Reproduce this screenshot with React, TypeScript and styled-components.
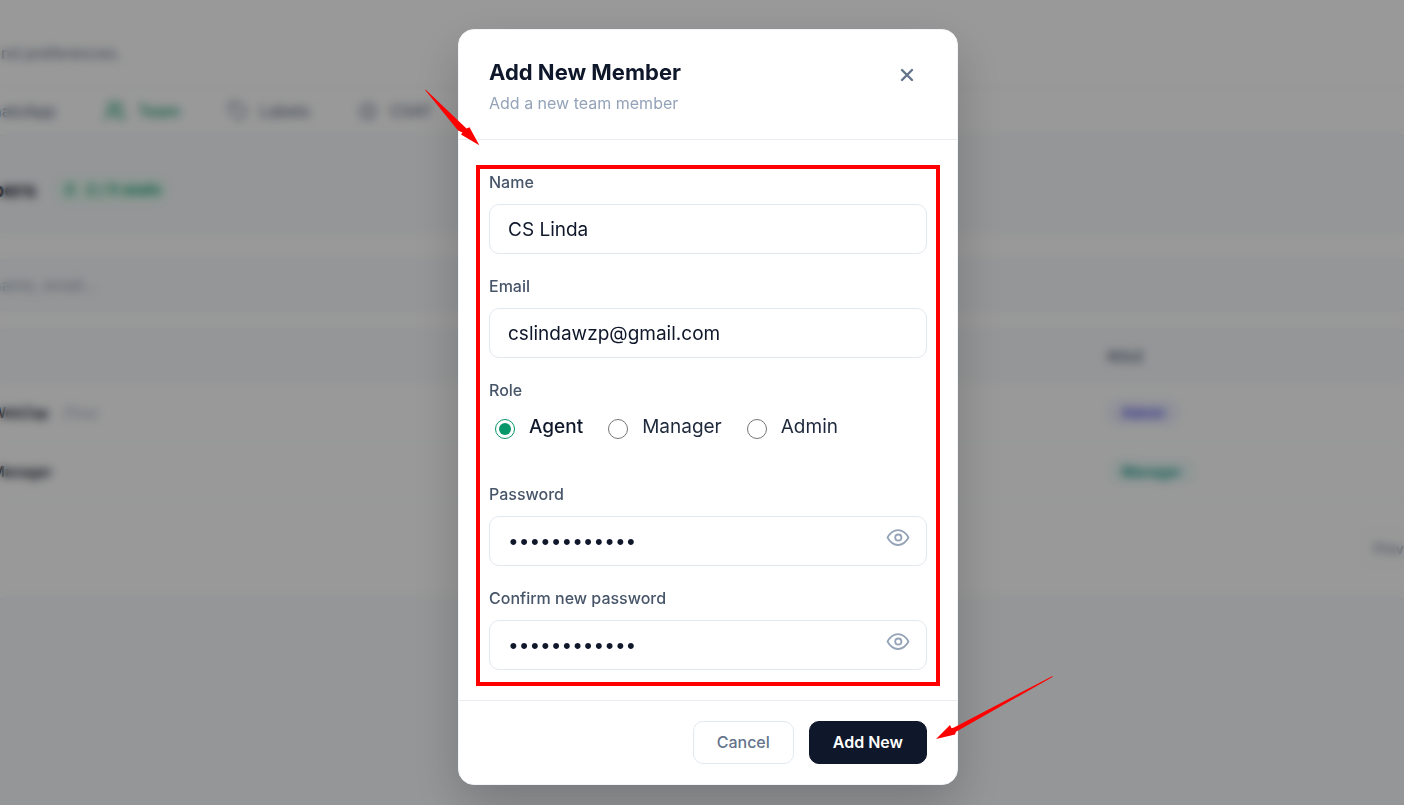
import React, { useState } from "react";
import styled, { createGlobalStyle } from "styled-components";
import { Tag, Star, Users, User } from "lucide-react";

const GlobalStyle = createGlobalStyle`
  *, *::before, *::after { box-sizing: border-box; }
  body {
    margin: 0;
    min-height: 100vh;
    background: #f8fafc;
    font-family: Inter, "Liberation Sans", sans-serif;
    color: #0f172a;
    overflow: hidden;
  }
  button, input { font: inherit; }
`;

const Backdrop = styled.div`
  height: 100vh;
  margin-left: -8px;
  overflow: hidden;
`;

const PageHeader = styled.header`
  background: #ffffff;
`;

const PageIntro = styled.p`
  margin: 0;
  padding: 41px 0 21px;
  font-size: 16px;
  line-height: 24px;
  color: #64748b;
  border-bottom: 1px solid #f1f5f9;
`;

const Tabs = styled.nav`
  display: flex;
  align-items: center;
  gap: 48px;
  height: 49px;
  border-bottom: 1px solid #e2e8f0;
`;

const Tab = styled.a<{ $active?: boolean }>`
  display: flex;
  align-items: center;
  gap: 12px;
  font-size: 16px;
  font-weight: 500;
  text-decoration: none;
  color: ${(p) => (p.$active ? "#059669" : "#64748b")};
`;

const SectionHead = styled.div`
  display: flex;
  align-items: center;
  gap: 18px;
  padding: 40px 0 28px;
`;

const SectionTitle = styled.h2`
  margin: 0;
  font-size: 20px;
  line-height: 28px;
  font-weight: 700;
`;

const Seats = styled.span`
  display: flex;
  align-items: center;
  gap: 8px;
  padding: 0 8px;
  border-radius: 13px;
  background: #ecfdf5;
  color: #059669;
  font-size: 15px;
  line-height: 26px;
  font-weight: 600;
`;

const Panel = styled.section`
  background: #ffffff;
  border-top: 1px solid #f1f5f9;
  border-bottom: 1px solid #e2e8f0;
`;

const SearchBar = styled.div`
  padding: 27px 0 20px;
`;

const Search = styled.input`
  display: block;
  width: 100%;
  height: 50px;
  padding: 4px 0;
  border: 1px solid #e2e8f0;
  border-width: 1px 0;
  background: #f8fafc;
  font-size: 16px;
  &::placeholder { color: #94a3b8; opacity: 1; }
`;

const Members = styled.table`
  width: 100%;
  border-collapse: collapse;
  table-layout: fixed;
  font-size: 14px;
  text-align: left;
  th, td { height: 59px; padding: 0; border-bottom: 1px solid #f8fafc; }
  th { height: 52px; background: #f8fafc; border-top: 1px solid #e2e8f0; color: #64748b; }
  th:first-child { width: 79%; }
  td { font-weight: 600; }
`;

const You = styled.span`
  margin-left: 14px;
  font-weight: 400;
  color: #94a3b8;
`;

const Badge = styled.span<{ $tone: "violet" | "teal" }>`
  padding: 4px 14px;
  border-radius: 12px;
  font-size: 14px;
  color: ${(p) => (p.$tone === "violet" ? "#4f46e5" : "#0d9488")};
  background: ${(p) => (p.$tone === "violet" ? "#eef2ff" : "#f0fdfa")};
`;

const Pager = styled.div`
  display: flex;
  justify-content: flex-end;
  padding: 29px 0 32px;
`;

const PagerButton = styled.button`
  height: 36px;
  margin-right: -38px;
  padding: 0 10px;
  border: 1px solid #f1f5f9;
  border-radius: 8px;
  background: #ffffff;
  color: #64748b;
  font-size: 14px;
`;

const Overlay = styled.div`
  position: fixed;
  inset: 0;
  display: flex;
  justify-content: center;
  align-items: flex-start;
  padding: 29px 0 20px 12px;
  background: rgba(0, 0, 0, 0.4);
  backdrop-filter: blur(5px);
  overflow: hidden;
`;

const Dialog = styled.form`
  position: relative;
  width: 500px;
  max-width: 100%;
  border: 1px solid #f1f5f9;
  border-radius: 16px;
  background: #ffffff;
  box-shadow: 0 20px 50px rgba(0, 0, 0, 0.2);
`;

const DialogHeader = styled.header`
  display: flex;
  justify-content: space-between;
  align-items: flex-start;
  padding: 27px 30px 24px;
  border-bottom: 1px solid #e9edf2;
`;

const Title = styled.h1`
  margin: 0;
  font-size: 22px;
  line-height: 30px;
  font-weight: 700;
`;

const Subtitle = styled.p`
  margin: 4px 0 0;
  font-size: 16px;
  line-height: 24px;
  color: #94a3b8;
`;

const CloseButton = styled.button`
  display: flex;
  align-items: center;
  justify-content: center;
  width: 40px;
  height: 36px;
  padding: 0;
  border: 0;
  background: none;
  color: #64748b;
`;

const Fields = styled.div`
  display: flex;
  flex-direction: column;
  gap: 20px;
  padding: 30px;
`;

const Field = styled.div`
  display: flex;
  flex-direction: column;
  gap: 10px;
`;

const Label = styled.label`
  font-size: 16px;
  line-height: 24px;
  font-weight: 500;
  color: #475569;
`;

const InputBox = styled.div`
  display: flex;
  align-items: center;
  height: 50px;
  border: 1px solid #e2e8f0;
  border-radius: 10px;
  background: #ffffff;
`;

const TextInput = styled.input`
  flex: 1;
  min-width: 0;
  height: 48px;
  padding: 0 18px;
  border: 0;
  outline: 0;
  background: none;
  font-size: 19px;
  color: #0f172a;
`;

const RevealButton = styled.button`
  display: flex;
  width: 24px;
  height: 24px;
  margin: 0 16px 6px 0;
  padding: 0;
  border: 0;
  background: none;
  color: #94a3b8;
`;

const RoleField = styled.fieldset`
  margin: 0;
  padding: 0 0 22px;
  border: 0;
`;

const Legend = styled.legend`
  padding: 0;
  font-size: 16px;
  line-height: 24px;
  font-weight: 500;
  color: #475569;
`;

const Roles = styled.div`
  display: flex;
  gap: 25px;
  padding: 12px 6px 0;
`;

const RoleOption = styled.label<{ $checked: boolean }>`
  display: flex;
  align-items: flex-start;
  gap: 14px;
  font-size: 19px;
  line-height: 26px;
  font-weight: ${(p) => (p.$checked ? 500 : 400)};
  color: ${(p) => (p.$checked ? "#0f172a" : "#1e293b")};
`;

const Radio = styled.input`
  width: 20px;
  height: 20px;
  margin: 5px 0 0;
  accent-color: #059669;
`;

const DialogFooter = styled.footer`
  display: flex;
  justify-content: flex-end;
  gap: 15px;
  padding: 20px 30px;
  border-top: 1px solid #e9edf2;
`;

const Action = styled.button<{ $primary?: boolean }>`
  height: 43px;
  padding: 0 23px 2px;
  border: 1px solid ${(p) => (p.$primary ? "#0f172a" : "#e2e8f0")};
  border-radius: 10px;
  background: ${(p) => (p.$primary ? "#0f172a" : "#ffffff")};
  color: ${(p) => (p.$primary ? "#ffffff" : "#64748b")};
  font-size: 16px;
  font-weight: ${(p) => (p.$primary ? 600 : 500)};
`;

const Highlight = styled.div`
  position: absolute;
  inset: 135px 17px 98px;
  border: 4px solid #ff0000;
  pointer-events: none;
`;

const Arrow = styled.svg<{ $place: "start" | "end" }>`
  position: absolute;
  pointer-events: none;
  fill: #ff0000;
  ${(p) => (p.$place === "start" ? "left: -39px; top: 54px;" : "right: -103px; bottom: 38px;")}
`;

const EyeIcon = () => (
  <svg width="24" height="24" viewBox="0 0 24 24" fill="none" stroke="currentColor" strokeWidth="1.8" strokeLinejoin="round" aria-hidden="true">
    <path d="M1.500 11.500C4.300 6.600 8 4.200 12 4.200S19.700 6.600 22.500 11.500C19.700 16.600 16 19 12 19S4.300 16.600 1.500 11.500Z" />
    <circle cx="12.300" cy="11.600" r="3.100" />
  </svg>
);

function TextField(props: { id: string; label: string; type?: string; value: string }) {
  const secret = props.type === "password";
  const [value, setValue] = useState(props.value);
  const [shown, setShown] = useState(false);
  return (
    <Field>
      <Label htmlFor={props.id}>{props.label}</Label>
      <InputBox>
        <TextInput
          id={props.id}
          type={secret && shown ? "text" : props.type ?? "text"}
          value={value}
          onChange={(e) => setValue(e.target.value)}
        />
        {secret && (
          <RevealButton type="button" aria-label="Show password" onClick={() => setShown(!shown)}>
            <EyeIcon />
          </RevealButton>
        )}
      </InputBox>
    </Field>
  );
}

export default function App() {
  const [role, setRole] = useState("Agent");
  return (
    <>
      <GlobalStyle />
      <Backdrop aria-hidden="true">
        <PageHeader>
          <PageIntro>and preferences.</PageIntro>
          <Tabs>
            <Tab href="#whatsapp">hatsApp</Tab>
            <Tab href="#team" $active><Users size={22} />Team</Tab>
            <Tab href="#labels"><Tag size={20} />Labels</Tab>
            <Tab href="#csat"><Star size={20} />CSAT</Tab>
          </Tabs>
        </PageHeader>
        <SectionHead>
          <SectionTitle>bers</SectionTitle>
          <Seats><User size={16} />2 / 5 seats</Seats>
        </SectionHead>
        <Panel>
          <SearchBar><Search aria-label="Search members" placeholder="name, email..." /></SearchBar>
          <Members>
            <thead><tr><th /><th>ROLE</th></tr></thead>
            <tbody>
              <tr><td>WebZap<You>(You)</You></td><td><Badge $tone="violet">Admin</Badge></td></tr>
              <tr><td>Manager</td><td><Badge $tone="teal">Manager</Badge></td></tr>
            </tbody>
          </Members>
          <Pager><PagerButton>Previous</PagerButton></Pager>
        </Panel>
      </Backdrop>
      <Overlay>
        <Dialog role="dialog" aria-labelledby="dialog-title" onSubmit={(e) => e.preventDefault()}>
          <DialogHeader>
            <div>
              <Title id="dialog-title">Add New Member</Title>
              <Subtitle>Add a new team member</Subtitle>
            </div>
            <CloseButton type="button" aria-label="Close">
              <svg width="14" height="14" viewBox="0 0 14 14" stroke="currentColor" strokeWidth="2.4" strokeLinecap="round">
                <path d="M2 2l10 10M12 2L2 12" />
              </svg>
            </CloseButton>
          </DialogHeader>
          <Fields>
            <TextField id="name" label="Name" value="CS Linda" />
            <TextField id="email" label="Email" type="email" value="cslindawzp@gmail.com" />
            <RoleField>
              <Legend>Role</Legend>
              <Roles>
                {["Agent", "Manager", "Admin"].map((r) => (
                  <RoleOption key={r} $checked={role === r}>
                    <Radio type="radio" name="role" value={r} checked={role === r} onChange={() => setRole(r)} />
                    {r}
                  </RoleOption>
                ))}
              </Roles>
            </RoleField>
            <TextField id="password" label="Password" type="password" value="lindasecret1" />
            <TextField id="confirm" label="Confirm new password" type="password" value="lindasecret1" />
          </Fields>
          <DialogFooter>
            <Action type="button">Cancel</Action>
            <Action type="submit" $primary>Add New</Action>
          </DialogFooter>
          <Highlight />
          <Arrow $place="start" width="66" height="66" viewBox="0 0 66 66" aria-hidden="true">
            <path d="M5.500 5.500L46.500 44.500L49.500 43.300L59.300 61.300L41 50.500L42.500 48.500L38 46.500L5.500 6.500Z" />
          </Arrow>
          <Arrow $place="end" width="130" height="76" viewBox="0 0 130 76" aria-hidden="true">
            <path d="M122.500 6L122.500 7L26 61.800L25 64.500L6 69L20 55L21.500 58.300L24 57.500Z" />
          </Arrow>
        </Dialog>
      </Overlay>
    </>
  );
}
